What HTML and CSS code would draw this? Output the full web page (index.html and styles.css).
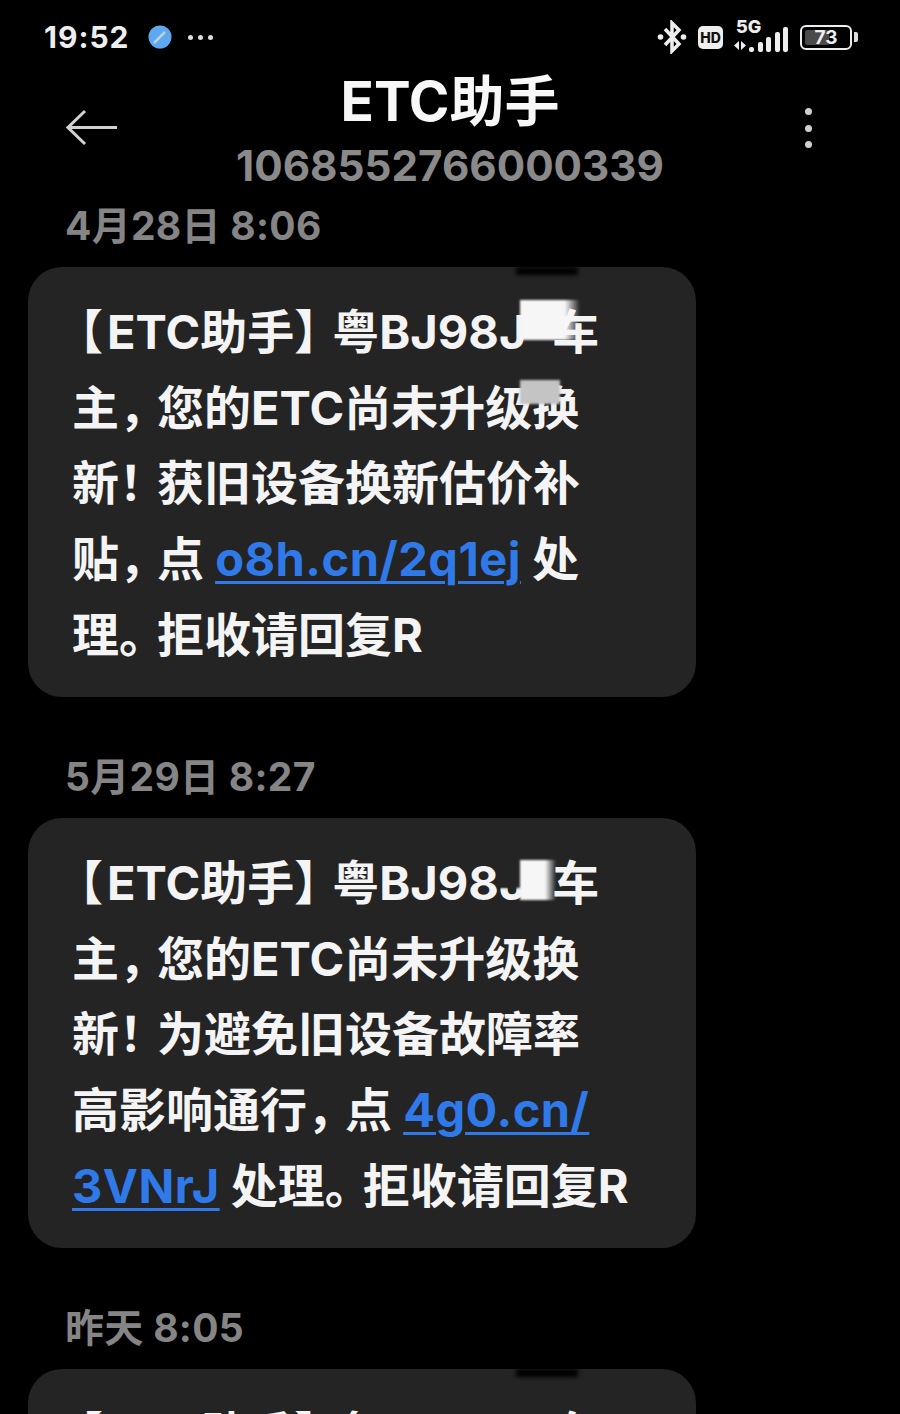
FILE: index.html
```html
<html>
	<head>
		<meta charset="UTF-8" />
		<title>ETC助手</title>
		<link rel="stylesheet" href="styles.css">
	</head>
	<body>
		<div class="status">
			<div class="status-left">
				<span class="clock">19:52</span>
				<svg class="compass" width="24" height="24" viewBox="0 0 24 24">
					<circle cx="12" cy="12" r="11.500" fill="#5ea8f2"/>
					<path d="M6 18 L17 7" stroke="#b9d3d8" stroke-width="2.500"/>
				</svg>
				<span class="more-dots"><i></i><i></i><i></i></span>
			</div>
			<div class="status-right">
				<svg width="30" height="34" viewBox="0 0 30 34">
					<path d="M8 9 L22 24 L15 31 V3 L22 10 L8 25" fill="none" stroke="#eee" stroke-width="3.500"/>
					<circle cx="3.500" cy="17" r="2.800" fill="#eee"/>
					<circle cx="26.500" cy="17" r="2.800" fill="#eee"/>
				</svg>
				<span class="hd">HD</span>
				<div class="signal">
					<span class="five-g">5G</span>
					<svg class="arrows" width="14" height="9" viewBox="0 0 14 9">
						<path d="M6 0 V9 L1 4.500 Z M8 0 V9 L13 4.500 Z" fill="#eee"/>
					</svg>
					<span class="bars"><i class="b1"></i><i class="b2"></i><i class="b3"></i><i class="b4"></i><i class="b5"></i></span>
				</div>
				<div class="battery"><span class="level"></span><span class="num">73</span></div>
				<span class="cap"></span>
			</div>
		</div>

		<div class="header">
			<svg class="back" width="52" height="38" viewBox="0 0 52 38">
				<path d="M19 2 L2 18.500 L19 35 M2 18.500 H51" fill="none" stroke="#d2d2d2" stroke-width="3"/>
			</svg>
			<div class="titles">
				<div class="title">ETC助手</div>
				<div class="number">1068552766000339</div>
			</div>
			<div class="menu"><i></i><i></i><i></i></div>
		</div>

		<div class="thread">
			<div class="date">4月28日 8:06</div>
			<div class="bubble">
				<span class="open">【</span>ETC助手<span class="pn">】</span>粤BJ98J<span class="gap"></span>车<br>
				主<span class="pn">，</span>您的ETC尚未升级换<br>
				新<span class="pn">！</span>获旧设备换新估价补<br>
				贴<span class="pn">，</span>点 <a>o8h.cn/2q1ej</a> 处<br>
				理<span class="pn">。</span>拒收请回复R
				<span class="mask mask-a"></span>
				<span class="mask mask-b"></span>
				<span class="notch"></span>
			</div>

			<div class="date">5月29日 8:27</div>
			<div class="bubble">
				<span class="open">【</span>ETC助手<span class="pn">】</span>粤BJ98J<span class="gap"></span>车<br>
				主<span class="pn">，</span>您的ETC尚未升级换<br>
				新<span class="pn">！</span>为避免旧设备故障率<br>
				高影响通行<span class="pn">，</span>点 <a>4g0.cn/</a><br>
				<a>3VNrJ</a> 处理<span class="pn">。</span>拒收请回复R
				<span class="smudge"></span>
				<span class="mask mask-c"></span>
			</div>

			<div class="date">昨天 8:05</div>
			<div class="bubble">
				<span class="open">【</span>ETC助手<span class="pn">】</span>粤BJ98J<span class="gap"></span>车
				<span class="notch"></span>
			</div>
		</div>
	</body>
</html>
```

FILE: styles.css
```css
html, body { margin: 0; height: 1414px; overflow: hidden; background: #000; }
body { font-family: Inter, "Noto Sans CJK SC", sans-serif; color: #f4f4f4; }
i { display: block; }

.status { display: flex; justify-content: space-between; align-items: center; height: 36px; padding: 19px 42px 0 44px; }
.status-left, .status-right { display: flex; align-items: center; }
.clock { font-size: 30px; font-weight: 700; letter-spacing: 1px; color: #eee; }
.compass { margin-left: 18px; }
.more-dots { display: flex; gap: 5px; margin-left: 16px; }
.more-dots i { width: 5px; height: 5px; border-radius: 50%; background: #ddd; }

.hd { margin-left: 11px; width: 25px; height: 23px; border-radius: 5px; background: #eee; color: #111; font-size: 14px; font-weight: 800; line-height: 23px; text-align: center; }
.signal { position: relative; width: 55px; height: 30px; margin-left: 10px; }
.five-g { position: absolute; left: 3px; top: -6px; font-size: 18px; font-weight: 800; color: #eee; }
.arrows { position: absolute; left: 0; bottom: 2px; }
.bars { position: absolute; right: 0; bottom: 0; display: flex; align-items: flex-end; gap: 3.500px; }
.bars i { width: 5px; background: #eee; border-radius: 2px; }
.b1 { height: 5px; } .b2 { height: 10px; } .b3 { height: 15px; } .b4 { height: 20px; } .b5 { height: 25px; }
.battery { position: relative; width: 48px; height: 21px; margin-left: 12px; border: 2px solid #eee; border-radius: 6px; }
.level { position: absolute; left: 3px; top: 3px; bottom: 3px; width: 50%; background: #4a4a4a; border-radius: 2px; }
.num { position: absolute; left: 0; right: 0; top: 0; text-align: center; font-size: 19px; font-weight: 700; line-height: 21px; color: #eee; }
.cap { width: 4px; height: 10px; margin-left: 2px; background: #ddd; border-radius: 0 2px 2px 0; }

.header { position: relative; height: 133px; padding-top: 12px; }
.back { position: absolute; left: 66px; top: 54px; }
.titles { text-align: center; }
.title { font-size: 55px; font-weight: 700; line-height: 69px; color: #f8f8f8; }
.number { font-size: 42.200px; font-weight: 700; line-height: 60px; color: #8a8a8a; }
.menu { position: absolute; left: 805px; top: 53px; display: flex; flex-direction: column; gap: 9.500px; }
.menu i { width: 7px; height: 7px; border-radius: 50%; background: #d0d0d0; }

.thread { padding: 0 204px 0 28px; }
.date { padding-left: 37px; height: 67px; font-size: 39px; font-weight: 700; line-height: 52px; letter-spacing: 0.300px; color: #858585; }
.bubble { position: relative; height: 347px; margin-bottom: 54px; padding: 27px 0 56px 44px; border-radius: 34px; background: #242424; font-size: 47px; font-weight: 700; line-height: 75.700px; white-space: nowrap; }
.bubble a { color: #2f7ae8; letter-spacing: 0.500px; text-decoration: underline; text-underline-offset: 5px; text-decoration-thickness: 3px; }
.pn { letter-spacing: -9px; }
.open { margin-left: -16px; letter-spacing: 4px; }
.gap { display: inline-block; width: 26px; }

.mask { position: absolute; filter: blur(1px); }
.mask-a { left: 492px; top: 33px; width: 60px; height: 40px; background: linear-gradient(90deg, #f6f6f6 75%, rgba(246, 246, 246, 0)); }
.mask-b { left: 492px; top: 113px; width: 40px; height: 24px; background: #c4c4c4; }
.mask-c { left: 492px; top: 42px; width: 36px; height: 40px; background: linear-gradient(90deg, #f6f6f6 70%, rgba(246, 246, 246, 0)); }
.smudge { position: absolute; left: 470px; top: 36px; width: 28px; height: 34px; background: #242424; filter: blur(1px); }
.notch { position: absolute; left: 488px; top: 0; width: 62px; height: 8px; background: #000; filter: blur(2px); }
```
